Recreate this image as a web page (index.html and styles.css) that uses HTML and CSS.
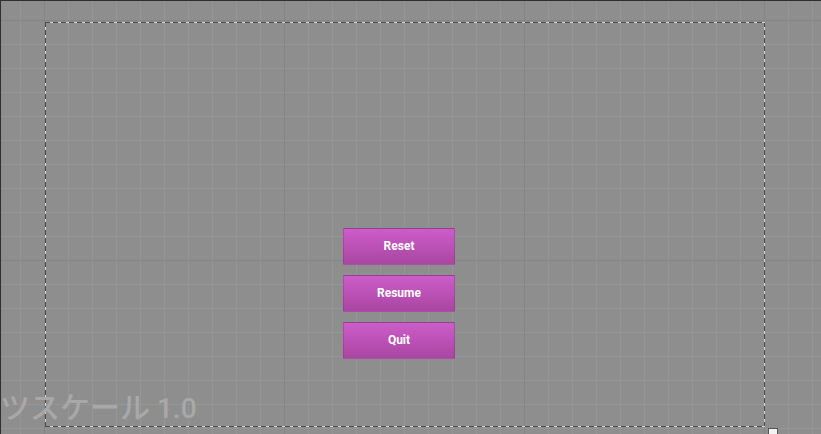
FILE: index.html
```html
<!DOCTYPE html>
<html lang="ja">
<head>
<meta charset="utf-8">
<title>Designer</title>
<link rel="stylesheet" href="styles.css">
</head>
<body>
<div class="canvas">
  <div class="surface">
    <div class="menu">
      <button class="btn">Reset</button>
      <button class="btn">Resume</button>
      <button class="btn">Quit</button>
    </div>
  </div>
  <div class="scale-label"><span class="jp">ツスケール</span><span class="num">&nbsp;1.0</span></div>
  <div class="handle"></div>
</div>
</body>
</html>
```
FILE: styles.css
```css
html, body {
  margin: 0;
  padding: 0;
  width: 821px;
  height: 434px;
  overflow: hidden;
  background: #8e8e8e;
}
.canvas {
  position: relative;
  box-sizing: border-box;
  width: 821px;
  height: 434px;
  border-top: 1px solid #2f2f2f;
  border-left: 1px solid #2f2f2f;
  padding-top: 21px;
  padding-left: 44px;
  background-color: #8e8e8e;
  background-image:
    linear-gradient(to right, #858585 1px, transparent 1px),
    linear-gradient(to bottom, #858585 1px, transparent 1px),
    linear-gradient(to right, #969696 1px, transparent 1px),
    linear-gradient(to bottom, #969696 1px, transparent 1px);
  background-size: 240px 100%, 100% 240px, 24px 100%, 100% 24px;
  background-position: 43px 0, 0 19px, 19px 0, 0 19px;
}
.surface {
  box-sizing: border-box;
  width: 720px;
  height: 405px;
  padding-top: 206px;
  padding-left: 298px;
  background:
    repeating-linear-gradient(90deg, #4c4c4c 0 5px, #d6d6d6 5px 8px) left top / 100% 1px no-repeat,
    repeating-linear-gradient(90deg, #4c4c4c 0 5px, #d6d6d6 5px 8px) left bottom / 100% 1px no-repeat,
    repeating-linear-gradient(180deg, #4c4c4c 0 5px, #d6d6d6 5px 8px) left top / 1px 100% no-repeat,
    repeating-linear-gradient(180deg, #4c4c4c 0 5px, #d6d6d6 5px 8px) right top / 1px 100% no-repeat;
}
.menu {
  display: flex;
  flex-direction: column;
  gap: 10px;
  width: 112px;
}
.btn {
  box-sizing: border-box;
  width: 112px;
  height: 37px;
  margin: 0;
  padding: 0 0 2px 0;
  border: 1px solid rgba(120, 50, 115, 0.35);
  border-radius: 1px;
  background: linear-gradient(to bottom, #cb5dc8 0%, #bd52b9 45%, #a8479f 100%);
  color: #ffffff;
  font-family: Roboto, "Liberation Sans", sans-serif;
  font-weight: 700;
  font-size: 12px;
  line-height: 1;
  text-align: center;
}
.scale-label {
  position: absolute;
  left: -1px;
  top: 389px;
  display: flex;
  align-items: baseline;
  line-height: 30px;
  color: #a8a8a8;
  white-space: nowrap;
}
.jp {
  font-family: "Noto Sans CJK JP", sans-serif;
  font-size: 30px;
  font-weight: 500;
}
.num {
  font-family: Roboto, "Liberation Sans", sans-serif;
  font-size: 28px;
  font-weight: 500;
}
.handle {
  position: absolute;
  left: 767px;
  top: 427px;
  width: 8px;
  height: 8px;
  border: 1px solid #555555;
  background: #f2f2f2;
}
```
